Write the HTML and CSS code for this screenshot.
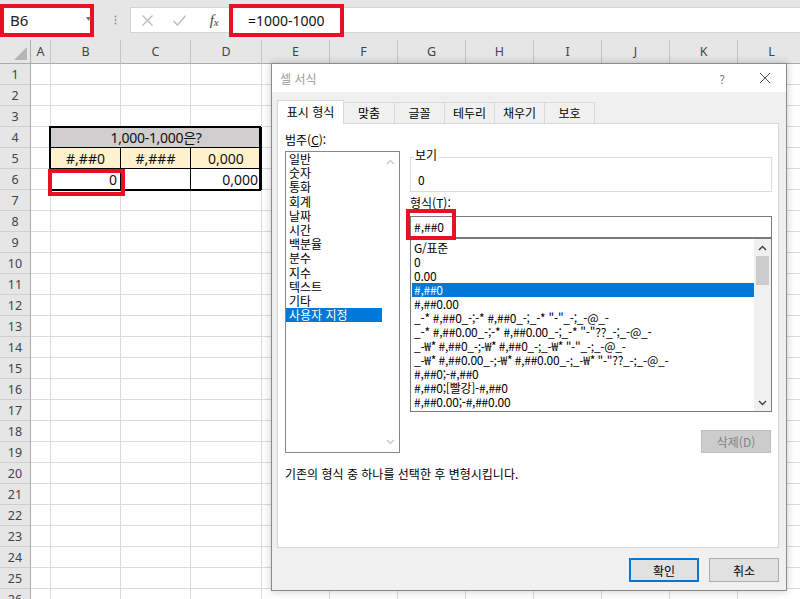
FILE: index.html
```html
<!DOCTYPE html>
<html lang="ko">
<head>
<meta charset="utf-8">
<title>셀 서식</title>
<link rel="stylesheet" href="styles.css">
</head>
<body>
<div class="topbar">
  <div class="namebox"><span>B6</span><svg class="dd" width="5" height="4" viewBox="0 0 5 4"><polygon points="0,0 5,0 2.5,4" fill="#777"/></svg></div>
  <div class="vdots"><svg width="3" height="10" viewBox="0 0 3 10"><circle cx="1.5" cy="1.5" r="0.9" fill="#8a8a8a"/><circle cx="1.5" cy="5" r="0.9" fill="#8a8a8a"/><circle cx="1.5" cy="8.5" r="0.9" fill="#8a8a8a"/></svg></div>
  <div class="fbar">
    <div class="fbtns">
      <span class="slot"><svg width="11" height="11" viewBox="0 0 11 11"><path d="M0.5 0.5L10.5 10.5M10.5 0.5L0.5 10.5" stroke="#b8b8b8" stroke-width="1.2" fill="none"/></svg></span>
      <span class="slot"><svg width="13" height="11" viewBox="0 0 13 11"><path d="M0.5 6L4.5 10L12.5 0.8" stroke="#b8b8b8" stroke-width="1.3" fill="none"/></svg></span>
      <span class="slot fx"><span class="fx-f">f</span><span class="fx-x">x</span></span>
    </div>
    <div class="formula">=1000-1000</div>
  </div>
</div>

<div class="sheet">
  <div class="corner"><svg width="13" height="13" viewBox="0 0 13 13"><polygon points="13,0 13,13 0,13" fill="#b5b5b5"/></svg></div>
  <div class="ch">A</div><div class="ch">B</div><div class="ch">C</div><div class="ch">D</div><div class="ch">E</div><div class="ch">F</div><div class="ch">G</div><div class="ch">H</div><div class="ch">I</div><div class="ch">J</div><div class="ch">K</div><div class="ch">L</div>

  <span class="rh">1</span><i></i><i></i><i></i><i></i><i></i><i></i><i></i><i></i><i></i><i></i><i></i><i></i>
  <span class="rh">2</span><i></i><i></i><i></i><i></i><i></i><i></i><i></i><i></i><i></i><i></i><i></i><i></i>
  <span class="rh">3</span><i></i><i></i><i></i><i></i><i></i><i></i><i></i><i></i><i></i><i></i><i></i><i></i>
  <span class="rh">4</span><i></i><div class="c t-head">1,000-1,000은?</div><i></i><i></i><i></i><i></i><i></i><i></i><i></i><i></i>
  <span class="rh">5</span><i></i><div class="c t-fmt col-b">#,##0</div><div class="c t-fmt col-c">#,###</div><div class="c t-fmt col-d">0,000</div><i></i><i></i><i></i><i></i><i></i><i></i><i></i><i></i>
  <span class="rh">6</span><i></i><div class="c t-val col-b">0</div><div class="c t-val col-c"></div><div class="c t-val col-d">0,000</div><i></i><i></i><i></i><i></i><i></i><i></i><i></i><i></i>
  <div class="tframe"></div>
  <div class="b6mark"></div>
  <span class="rh">7</span><i></i><i></i><i></i><i></i><i></i><i></i><i></i><i></i><i></i><i></i><i></i><i></i>
  <span class="rh">8</span><i></i><i></i><i></i><i></i><i></i><i></i><i></i><i></i><i></i><i></i><i></i><i></i>
  <span class="rh">9</span><i></i><i></i><i></i><i></i><i></i><i></i><i></i><i></i><i></i><i></i><i></i><i></i>
  <span class="rh">10</span><i></i><i></i><i></i><i></i><i></i><i></i><i></i><i></i><i></i><i></i><i></i><i></i>
  <span class="rh">11</span><i></i><i></i><i></i><i></i><i></i><i></i><i></i><i></i><i></i><i></i><i></i><i></i>
  <span class="rh">12</span><i></i><i></i><i></i><i></i><i></i><i></i><i></i><i></i><i></i><i></i><i></i><i></i>
  <span class="rh">13</span><i></i><i></i><i></i><i></i><i></i><i></i><i></i><i></i><i></i><i></i><i></i><i></i>
  <span class="rh">14</span><i></i><i></i><i></i><i></i><i></i><i></i><i></i><i></i><i></i><i></i><i></i><i></i>
  <span class="rh">15</span><i></i><i></i><i></i><i></i><i></i><i></i><i></i><i></i><i></i><i></i><i></i><i></i>
  <span class="rh">16</span><i></i><i></i><i></i><i></i><i></i><i></i><i></i><i></i><i></i><i></i><i></i><i></i>
  <span class="rh">17</span><i></i><i></i><i></i><i></i><i></i><i></i><i></i><i></i><i></i><i></i><i></i><i></i>
  <span class="rh">18</span><i></i><i></i><i></i><i></i><i></i><i></i><i></i><i></i><i></i><i></i><i></i><i></i>
  <span class="rh">19</span><i></i><i></i><i></i><i></i><i></i><i></i><i></i><i></i><i></i><i></i><i></i><i></i>
  <span class="rh">20</span><i></i><i></i><i></i><i></i><i></i><i></i><i></i><i></i><i></i><i></i><i></i><i></i>
  <span class="rh">21</span><i></i><i></i><i></i><i></i><i></i><i></i><i></i><i></i><i></i><i></i><i></i><i></i>
  <span class="rh">22</span><i></i><i></i><i></i><i></i><i></i><i></i><i></i><i></i><i></i><i></i><i></i><i></i>
  <span class="rh">23</span><i></i><i></i><i></i><i></i><i></i><i></i><i></i><i></i><i></i><i></i><i></i><i></i>
  <span class="rh">24</span><i></i><i></i><i></i><i></i><i></i><i></i><i></i><i></i><i></i><i></i><i></i><i></i>
  <span class="rh">25</span><i></i><i></i><i></i><i></i><i></i><i></i><i></i><i></i><i></i><i></i><i></i><i></i>
  <span class="rh">26</span><i></i><i></i><i></i><i></i><i></i><i></i><i></i><i></i><i></i><i></i><i></i><i></i>
</div>

<div class="dialog">
  <div class="titlebar">
    <span class="title">셀 서식</span>
    <span class="help">?</span>
    <svg class="close" width="10" height="10" viewBox="0 0 10 10"><path d="M0 0L10 10M10 0L0 10" stroke="#555" stroke-width="1" fill="none"/></svg>
  </div>
  <div class="dbody">
    <div class="tabs">
      <div class="tab on">표시 형식</div>
      <div class="tab">맞춤</div>
      <div class="tab">글꼴</div>
      <div class="tab">테두리</div>
      <div class="tab">채우기</div>
      <div class="tab">보호</div>
    </div>
    <div class="panel">
      <div class="cols">
        <div class="left">
          <div class="lbl">범주(<u>C</u>):</div>
          <div class="listbox cat">
            <ul>
              <li>일반</li><li>숫자</li><li>통화</li><li>회계</li><li>날짜</li><li>시간</li><li>백분율</li><li>분수</li><li>지수</li><li>텍스트</li><li>기타</li><li class="sel">사용자 지정</li>
            </ul>
            <div class="vscroll off">
              <svg width="9" height="6" viewBox="0 0 9 6"><path d="M1 5L4.5 1.5L8 5" fill="none" stroke="#c4c4c4" stroke-width="1.2"/></svg>
              <svg width="9" height="6" viewBox="0 0 9 6"><path d="M1 1L4.5 4.5L8 1" fill="none" stroke="#c4c4c4" stroke-width="1.2"/></svg>
            </div>
          </div>
        </div>
        <div class="right">
          <fieldset class="preview">
            <legend>보기</legend>
            <div class="pv">0</div>
          </fieldset>
          <div class="lbl lbl-fmt">형식(<u>T</u>):</div>
          <div class="fmt-input"><span>#,##0</span><span class="mark"></span></div>
          <div class="listbox fmts">
            <ul>
              <li>G/표준</li>
              <li>0</li>
              <li>0.00</li>
              <li class="sel">#,##0</li>
              <li>#,##0.00</li>
              <li>_-* #,##0_-;-* #,##0_-;_-* "-"_-;_-@_-</li>
              <li>_-* #,##0.00_-;-* #,##0.00_-;_-* "-"??_-;_-@_-</li>
              <li>_-₩* #,##0_-;-₩* #,##0_-;_-₩* "-"_-;_-@_-</li>
              <li>_-₩* #,##0.00_-;-₩* #,##0.00_-;_-₩* "-"??_-;_-@_-</li>
              <li>#,##0;-#,##0</li>
              <li>#,##0;[빨강]-#,##0</li>
              <li>#,##0.00;-#,##0.00</li>
            </ul>
            <div class="vscroll on">
              <span class="sb-btn"><svg width="9" height="6" viewBox="0 0 9 6"><path d="M1 5L4.5 1.5L8 5" fill="none" stroke="#404040" stroke-width="1.4"/></svg></span>
              <span class="thumb"></span>
              <span class="sb-fill"></span>
              <span class="sb-btn"><svg width="9" height="6" viewBox="0 0 9 6"><path d="M1 1L4.5 4.5L8 1" fill="none" stroke="#404040" stroke-width="1.4"/></svg></span>
            </div>
          </div>
          <div class="delrow"><button class="btn dis">삭제(D)</button></div>
        </div>
      </div>
      <p class="desc">기존의 형식 중 하나를 선택한 후 변형시킵니다.</p>
    </div>
    <div class="btnrow">
      <button class="btn def">확인</button>
      <button class="btn">취소</button>
    </div>
  </div>
</div>
</body>
</html>
```

FILE: styles.css
```css
* { box-sizing: border-box; margin: 0; padding: 0; }
html, body { width: 800px; height: 599px; overflow: hidden; }
body {
  position: relative;
  background: #fff;
  color: #000;
  font-family: "Noto Sans", "Noto Sans CJK KR", sans-serif;
}

/* ---------- formula bar ---------- */
.topbar {
  height: 40px;
  background: #e6e6e6;
  display: flex;
  align-items: center;
}
.namebox {
  width: 94px;
  height: 33px;
  border: 4px solid #e81123;
  background: #fff;
  display: flex;
  align-items: center;
  justify-content: space-between;
  padding-left: 6px;
  font-size: 15px;
  color: #222;
}
.namebox .dd { margin-right: -1px; margin-top: -2px; }
.vdots {
  width: 36px;
  padding-left: 6px;
  display: flex;
  justify-content: center;
  align-items: center;
}
.fbar {
  flex: 1;
  height: 26px;
  background: #fff;
  border-top: 1px solid #d4d4d4;
  border-bottom: 1px solid #d4d4d4;
  border-left: 1px solid #d4d4d4;
  display: flex;
  align-items: center;
}
.fbtns { width: 98px; display: flex; }
.slot { width: 33px; height: 24px; display: flex; align-items: center; justify-content: center; }
.fx { color: #444; font-family: "Liberation Serif", serif; font-style: italic; padding-left: 3px; }
.fx-f { font-size: 15px; }
.fx-x { font-size: 11px; margin-top: 4px; }
.formula {
  width: 115px;
  height: 33px;
  border: 4px solid #e81123;
  background: #fff;
  padding-left: 15px;
  display: flex;
  align-items: center;
  font-size: 14px;
  color: #111;
}

/* ---------- sheet grid ---------- */
.sheet {
  display: grid;
  grid-template-columns: 31px 20px 70px 70px 71px repeat(8, 68px);
  grid-template-rows: 24px;
  grid-auto-rows: 21px;
}
.corner {
  background: #e6e6e6;
  border-right: 1px solid #ababab;
  border-bottom: 1px solid #ababab;
  display: flex;
  align-items: flex-end;
  justify-content: flex-end;
  padding: 0 3px 3px 0;
}
.ch {
  background: #e6e6e6;
  border-right: 1px solid #c4c4c4;
  border-bottom: 1px solid #ababab;
  font-size: 12.5px;
  color: #444;
  display: flex;
  align-items: center;
  justify-content: center;
}
.rh {
  background: #e6e6e6;
  border-right: 1px solid #ababab;
  border-bottom: 1px solid #cfcfcf;
  font-size: 12.5px;
  color: #444;
  display: flex;
  align-items: center;
  justify-content: center;
}
.sheet i {
  border-right: 1px solid #dadada;
  border-bottom: 1px solid #dadada;
}
.c {
  font-size: 14px;
  display: flex;
  align-items: center;
  padding: 0 3px;
  white-space: nowrap;
  border-right: 1px solid #000;
  border-bottom: 1px solid #000;
  color: #111;
}
.t-head { grid-column: 3 / 6; grid-row: 5; background: #d0cece; justify-content: center; letter-spacing: -0.3px; }
.t-fmt { grid-row: 6; background: #fff2cc; justify-content: center; }
.t-val { grid-row: 7; background: #fff; justify-content: flex-end; }
.col-b { grid-column: 3; }
.col-c { grid-column: 4; }
.col-d { grid-column: 5; }
.tframe {
  grid-column: 3 / 6;
  grid-row: 5 / 8;
  border: 2px solid #000;
  margin: -1px 1px -1px -2px;
  z-index: 2;
}
.b6mark {
  grid-column: 3;
  grid-row: 7;
  border: 4px solid #e81123;
  margin: 0 -4px -6px -3px;
  z-index: 3;
}

/* ---------- dialog ---------- */
.dialog {
  position: absolute;
  left: 271px;
  top: 63px;
  width: 516px;
  height: 528px;
  border: 1px solid #8a8a8a;
  background: #f0f0f0;
  box-shadow: 0 0 8px rgba(0, 0, 0, 0.22);
  font-family: "Noto Sans CJK KR", sans-serif;
  font-size: 12px;
  z-index: 10;
  display: flex;
  flex-direction: column;
}
.titlebar {
  height: 28px;
  background: #fff;
  display: flex;
  align-items: center;
  padding-left: 8px;
}
.title { flex: 1; color: #9a9a9a; }
.help { width: 20px; text-align: center; color: #777; margin-right: 28px; }
.close { margin-right: 16px; }
.dbody {
  flex: 1;
  padding: 8px 7px 0 5px;
  display: flex;
  flex-direction: column;
}
.tabs { display: flex; align-items: flex-end; height: 23px; }
.tab {
  width: 51px;
  height: 21px;
  margin-left: -1px;
  border: 1px solid #d9d9d9;
  border-bottom: none;
  background: #f0f0f0;
  text-align: center;
  line-height: 19px;
}
.tab.on {
  width: 67px;
  height: 24px;
  margin-left: 0;
  margin-bottom: -1px;
  background: #fff;
  line-height: 21px;
  position: relative;
  z-index: 1;
}
.tab.on + .tab { margin-left: 0; border-left: none; }
.panel {
  height: 425px;
  background: #fff;
  border: 1px solid #d9d9d9;
  padding: 9px 6px 0 7px;
}
.cols { display: grid; grid-template-columns: 115px 1fr; column-gap: 10px; }
.lbl { height: 14px; line-height: 14px; white-space: nowrap; }
.listbox { border: 1px solid #828790; background: #fff; display: flex; }
.listbox ul { list-style: none; flex: 1; min-width: 0; }
.listbox li { white-space: nowrap; }
.sel { background: #0078d7; color: #fff; }
.cat { margin-top: 4px; height: 302px; }
.cat li { height: 14.2px; line-height: 14.2px; padding-left: 3px; }
.vscroll { width: 17px; display: flex; flex-direction: column; align-items: center; }
.vscroll.off { justify-content: space-between; padding: 7px 0 7px; }
.vscroll.on { background: #f0f0f0; }
.sb-btn { height: 17px; width: 17px; display: flex; align-items: center; justify-content: center; }
.thumb { width: 13px; height: 29px; background: #cdcdcd; }
.sb-fill { flex: 1; }

.preview {
  margin-top: 15px;
  border: 1px solid #dcdcdc;
  padding: 7px 7px 4px 7px;
  min-width: 0;
}
.preview legend { margin-left: -4px; padding: 0 1px 4px; line-height: 14px; }
.pv { line-height: 14px; height: 14px; }
.lbl-fmt { margin-top: 4px; }
.fmt-input {
  margin-top: 6px;
  height: 22px;
  border: 1px solid #7a7a7a;
  padding-left: 3px;
  line-height: 20px;
  position: relative;
  background: #fff;
}
.fmt-input .mark {
  position: absolute;
  left: -5px;
  top: -8px;
  width: 50px;
  height: 31px;
  border: 4px solid #e81123;
}
.fmts { height: 174px; border-color: #7a7a7a; }
.fmts ul { padding: 2px 0 0 1px; }
.fmts li { height: 14px; line-height: 14px; padding-left: 2px; letter-spacing: -0.25px; }
.delrow { display: flex; justify-content: flex-end; margin-top: 18px; padding-right: 1px; }
.desc { margin-top: 14px; line-height: 14px; }

.btn {
  width: 70px;
  height: 24px;
  font-family: "Noto Sans CJK KR", sans-serif;
  font-size: 12px;
  background: #e1e1e1;
  border: 1px solid #adadad;
  color: #000;
}
.btn.dis { height: 23px; background: #cccccc; border-color: #bfbfbf; color: #838383; }
.btn.def { border: 2px solid #0078d7; }
.btnrow { display: flex; justify-content: flex-end; gap: 10px; margin-top: 10px; }
```
